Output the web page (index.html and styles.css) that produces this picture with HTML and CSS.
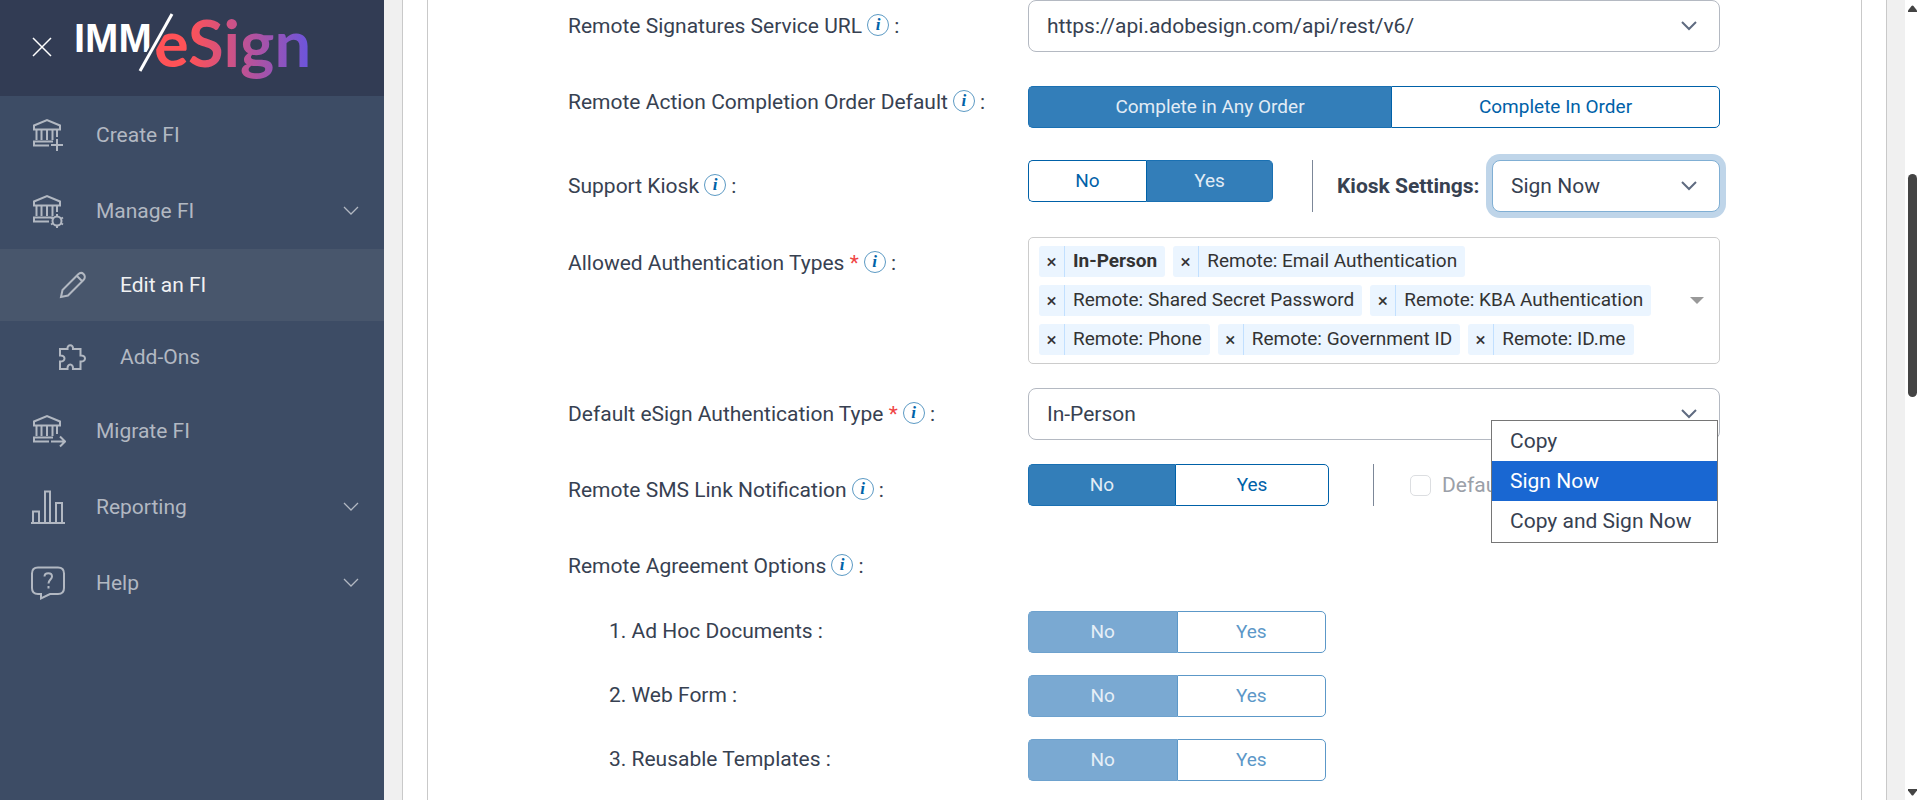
FILE: index.html
```html
<!DOCTYPE html>
<html lang="en">
<head>
  <meta charset="UTF-8" />
  <meta name="viewport" content="width=device-width, initial-scale=1" />
  <title>IMM/eSign - Edit an FI</title>
  <link rel="stylesheet" href="styles.css">
</head>
<body>
  <!-- shared icons -->
  <svg class="sprite" aria-hidden="true">
    <symbol id="bank" viewBox="0 0 36 36">
      <path d="M4 8.500 17 3 30 8.500V12.500H4ZM6.500 13V23M11.500 13V23M17 13V23M22.500 13V23M4 24.500H23M4 23.500V28.500H19" />
    </symbol>
    <symbol id="chevron" viewBox="0 0 16 10">
      <path d="M1 1 8 8 15 1" />
    </symbol>
  </svg>

  <aside class="sidebar">
    <header class="sidebar-header">
      <button type="button" class="close-btn" aria-label="Close menu">
        <svg viewBox="0 0 20 20"><path d="M1 1 19 19M19 1 1 19" /></svg>
      </button>
      <svg class="logo" viewBox="0 0 240 96">
        <defs>
          <linearGradient id="brand" gradientUnits="userSpaceOnUse" x1="82" y1="0" x2="232" y2="0">
            <stop offset="0.200" stop-color="#ff5257" />
            <stop offset="0.600" stop-color="#b8529a" />
            <stop offset="1" stop-color="#6b55dc" />
          </linearGradient>
        </defs>
        <text class="logo-imm" x="-3" y="52">IMM</text>
        <text class="logo-esign" x="77" y="67" fill="url(#brand)">eSign</text>
        <path class="logo-gap" d="M95 14 63 71" />
        <path class="logo-slash" d="M95 14 63 71" />
      </svg>
    </header>

    <nav class="menu">
      <a href="#" class="menu-item">
        <svg class="menu-icon" viewBox="0 0 36 36"><use href="#bank" /><path d="M27 13V20M27 22V34M21 28H33" /></svg>
        <span>Create FI</span>
      </a>
      <a href="#" class="menu-item">
        <svg class="menu-icon" viewBox="0 0 36 36">
          <use href="#bank" />
          <path d="M27 13V19" />
          <circle cx="27" cy="28" r="4.500" />
          <path d="M27 21V24M27 32V35M21 24.500 23.500 26M33 24.500 30.500 26M21 31.500 23.500 30M33 31.500 30.500 30" />
        </svg>
        <span>Manage FI</span>
        <svg class="menu-chevron"><use href="#chevron" /></svg>
      </a>
      <a href="#" class="menu-item sub active">
        <svg class="menu-icon" viewBox="0 0 28 28"><path d="M2 26 3.500 19 19 3.500C21 1.500 23 1.500 24.500 3S26.500 7 24.500 9L9 24.500ZM18 5 23 10" /></svg>
        <span>Edit an FI</span>
      </a>
      <a href="#" class="menu-item sub">
        <svg class="menu-icon" viewBox="0 0 28 28"><path d="M1 6H8.500C8 1 14.500 1 14 6H21.500V12.500C27.500 12 27.500 19 21.500 18.500V26H14C14.500 20 8 20 8.500 26H1V18.500C7 19 7 12 1 12.500Z" /></svg>
        <span>Add-Ons</span>
      </a>
      <a href="#" class="menu-item">
        <svg class="menu-icon" viewBox="0 0 36 36"><use href="#bank" /><path d="M27 13V21M21 28.500H35M30 23.500 35 28.500 30 33.500" /></svg>
        <span>Migrate FI</span>
      </a>
      <a href="#" class="menu-item">
        <svg class="menu-icon" viewBox="0 0 36 36"><path d="M1 34H35M3 34V22.500H9V34M15 34V2.500H20V34M26 34V14H32V34" /></svg>
        <span>Reporting</span>
        <svg class="menu-chevron"><use href="#chevron" /></svg>
      </a>
      <a href="#" class="menu-item">
        <svg class="menu-icon" viewBox="0 0 36 36">
          <path d="M8 2.500H28Q34 2.500 34 8.500V23Q34 29 28 29H20L11 33.500V29H8Q2 29 2 23V8.500Q2 2.500 8 2.500Z" />
          <path d="M14.500 11.500C14.500 7 22 7 22 11.500C22 14.500 18.500 14.500 18.500 18.500M18.500 21V23.500" />
        </svg>
        <span>Help</span>
        <svg class="menu-chevron"><use href="#chevron" /></svg>
      </a>
    </nav>
  </aside>

  <main class="page">
    <div class="card">
      <form class="settings">
        <div class="row">
          <div class="label"><label for="serviceUrl">Remote Signatures Service URL</label><span class="info">i</span> :</div>
          <div class="field">
            <div class="select-box">
              <select id="serviceUrl"><option>https://api.adobesign.com/api/rest/v6/</option></select>
              <svg><use href="#chevron" /></svg>
            </div>
          </div>
        </div>

        <div class="row row-order">
          <div class="label">Remote Action Completion Order Default<span class="info">i</span> :</div>
          <div class="field">
            <div class="toggle toggle-order">
              <button type="button" class="on">Complete in Any Order</button>
              <button type="button">Complete In Order</button>
            </div>
          </div>
        </div>

        <div class="row row-kiosk">
          <div class="label">Support Kiosk<span class="info">i</span> :</div>
          <div class="field split">
            <div class="toggle toggle-kiosk">
              <button type="button">No</button>
              <button type="button" class="on">Yes</button>
            </div>
            <div class="kiosk">
              <label for="kioskSettings">Kiosk Settings:</label>
              <div class="select-box focused">
                <select id="kioskSettings">
                  <option>Copy</option>
                  <option selected>Sign Now</option>
                  <option>Copy and Sign Now</option>
                </select>
                <svg><use href="#chevron" /></svg>
                <ul class="dropdown">
                  <li>Copy</li>
                  <li class="selected">Sign Now</li>
                  <li>Copy and Sign Now</li>
                </ul>
              </div>
            </div>
          </div>
        </div>

        <div class="row">
          <div class="label">Allowed Authentication Types <b class="req">*</b><span class="info">i</span> :</div>
          <div class="field">
            <div class="multi">
              <div class="chips">
                <span class="chip bold"><button type="button">×</button><span>In-Person</span></span>
                <span class="chip"><button type="button">×</button><span>Remote: Email Authentication</span></span>
                <span class="chip"><button type="button">×</button><span>Remote: Shared Secret Password</span></span>
                <span class="chip"><button type="button">×</button><span>Remote: KBA Authentication</span></span>
                <span class="chip"><button type="button">×</button><span>Remote: Phone</span></span>
                <span class="chip"><button type="button">×</button><span>Remote: Government ID</span></span>
                <span class="chip"><button type="button">×</button><span>Remote: ID.me</span></span>
              </div>
              <span class="caret"></span>
            </div>
          </div>
        </div>

        <div class="row">
          <div class="label"><label for="authType">Default eSign Authentication Type <b class="req">*</b></label><span class="info">i</span> :</div>
          <div class="field">
            <div class="select-box">
              <select id="authType"><option>In-Person</option></select>
              <svg><use href="#chevron" /></svg>
            </div>
          </div>
        </div>

        <div class="row">
          <div class="label">Remote SMS Link Notification<span class="info">i</span> :</div>
          <div class="field split">
            <div class="toggle toggle-sms">
              <button type="button" class="on">No</button>
              <button type="button">Yes</button>
            </div>
            <div class="default-check">
              <input type="checkbox" id="smsDefault" disabled />
              <label for="smsDefault">Default</label>
            </div>
          </div>
        </div>

        <div class="row row-heading">
          <div class="label">Remote Agreement Options<span class="info">i</span> :</div>
        </div>

        <div class="row row-sub">
          <div class="label">1. Ad Hoc Documents :</div>
          <div class="toggle toggle-sub">
            <button type="button" class="on" disabled>No</button>
            <button type="button" disabled>Yes</button>
          </div>
        </div>
        <div class="row row-sub">
          <div class="label">2. Web Form :</div>
          <div class="toggle toggle-sub">
            <button type="button" class="on" disabled>No</button>
            <button type="button" disabled>Yes</button>
          </div>
        </div>
        <div class="row row-sub">
          <div class="label">3. Reusable Templates :</div>
          <div class="toggle toggle-sub">
            <button type="button" class="on" disabled>No</button>
            <button type="button" disabled>Yes</button>
          </div>
        </div>
      </form>
    </div>
  </main>

  <div class="scrollbar" aria-hidden="true">
    <svg viewBox="0 0 9 7"><path d="M3.500 1Q4.500 0 5.500 1L9 5.500V7H0V5.500Z" /></svg>
    <div class="track"><div class="thumb"></div></div>
    <svg viewBox="0 0 9 7"><path d="M3.500 6Q4.500 7 5.500 6L9 1.500V0H0V1.500Z" /></svg>
  </div>
</body>
</html>
```
FILE: styles.css
```css
* {
  box-sizing: border-box;
}
body {
  margin: 0;
  height: 100vh;
  display: flex;
  overflow: hidden;
  background-color: #f0f0f0;
  color: #374151;
  font-family: Roboto, "Liberation Sans", sans-serif;
  font-size: 21px;
  line-height: 30px;
}
button, select, input {
  font: inherit;
  color: inherit;
}
.sprite {
  position: absolute;
  width: 0;
  height: 0;
}

/* sidebar */
.sidebar {
  width: 384px;
  flex-shrink: 0;
  background-color: #3d4c65;
}
.sidebar-header {
  height: 96px;
  padding-left: 32px;
  display: flex;
  gap: 25px;
  background-color: #323c54;
}
.close-btn {
  width: 20px;
  padding: 0;
  border: none;
  background: none;
  cursor: pointer;
}
.close-btn svg {
  display: block;
  width: 20px;
  height: 20px;
  margin-top: -3px;
  fill: none;
  stroke: #fff;
  stroke-width: 1.5;
}
.logo {
  width: 240px;
  height: 96px;
  overflow: visible;
}
.logo-imm {
  font: bold 40px "Liberation Sans", sans-serif;
  fill: #fff;
}
.logo-esign {
  font: bold 65px Lato, sans-serif;
}
.logo-gap {
  stroke: #323c54;
  stroke-width: 7;
}
.logo-slash {
  stroke: #fff;
  stroke-width: 3;
}
.menu {
  padding-top: 1px;
}
.menu-item {
  height: 76px;
  padding: 0 25px 0 30px;
  display: flex;
  align-items: center;
  color: #b2b8c2;
  text-decoration: none;
}
.menu-icon {
  width: 36px;
  height: 36px;
  margin-right: 30px;
  fill: none;
  stroke: #b2b8c2;
  stroke-width: 2;
}
.menu-chevron {
  width: 16px;
  height: 10px;
  margin-left: auto;
  fill: none;
  stroke: #b2b8c2;
  stroke-width: 1.3;
}
.menu-item.sub {
  height: 72px;
  padding-left: 59px;
}
.sub .menu-icon {
  width: 28px;
  height: 28px;
  margin-right: 33px;
}
.menu-item.active {
  background-color: #48566c;
  color: #f0f1f3;
}

/* form */
.page {
  flex: 1;
  padding: 0 18px;
}
.card {
  height: 100vh;
  padding: 0 24px;
  overflow: hidden;
  background-color: #fff;
  border: solid #c9c9c9;
  border-width: 0 1px;
}
.settings {
  min-height: 100%;
  padding: 0 141px 0 140px;
  border: solid #c9c9c9;
  border-width: 0 1px;
}
.row {
  display: grid;
  grid-template-columns: 460px 1fr;
  min-height: 52px;
  margin-bottom: 24px;
}
.row-order {
  min-height: 60px;
}
.row-order .toggle {
  margin-top: 10px;
}
.row-kiosk {
  min-height: 53px;
}
.label {
  padding-top: 11px;
}
.row-heading {
  margin-bottom: 19px;
}
.row-sub {
  min-height: 42px;
  margin-bottom: 22px;
}
.row-sub .label {
  padding: 5px 0 0 41px;
}
.req {
  color: #ef4444;
  font-weight: normal;
}
.info {
  display: inline-block;
  width: 22px;
  height: 22px;
  margin-left: 5px;
  border: 1px solid #5c9ac4;
  border-radius: 50%;
  color: #0063a8;
  font: italic bold 17px/20px "Liberation Serif", serif;
  text-align: center;
  vertical-align: 3px;
}
.select-box {
  position: relative;
}
.select-box select {
  display: block;
  width: 100%;
  height: 52px;
  padding: 0 18px;
  appearance: none;
  background-color: #fff;
  border: 1px solid #b4b9c2;
  border-radius: 8px;
}
.select-box > svg {
  position: absolute;
  top: 21px;
  right: 23px;
  width: 16px;
  height: 10px;
  fill: none;
  stroke: #5f6b80;
  stroke-width: 2;
  pointer-events: none;
}
.select-box.focused select {
  border-color: #80afd4;
  box-shadow: 0 0 0 6px #bfd5e9;
}
.split {
  display: flex;
  align-items: flex-start;
}

.toggle {
  display: flex;
  height: 42px;
}
.toggle button {
  flex: 1;
  padding: 0;
  font-size: 19px;
  color: #0061a8;
  background-color: #fff;
  border: 1px solid #0061a8;
  cursor: pointer;
}
.toggle button:first-child {
  border-right-width: 0;
  border-radius: 5px 0 0 5px;
}
.toggle button:last-child {
  border-radius: 0 5px 5px 0;
}
.toggle .on {
  color: #e2ecf5;
  background-color: #337eb9;
  border-color: #1a70b2;
}
.toggle .on:last-child {
  border-left-color: #0061a8;
}
.toggle-order button:first-child {
  flex: 0 0 363px;
}
.toggle-kiosk {
  width: 245px;
}
.toggle-kiosk button:first-child {
  flex: 0 0 118px;
}
.toggle-sms {
  width: 301px;
}
.toggle-sms button:first-child {
  flex: 0 0 147px;
}
.toggle-sub {
  width: 298px;
}
.toggle-sub button {
  color: #5c98c8;
  border-color: #5c98c8;
}
.toggle-sub .on {
  color: #e6eff7;
  background-color: #7aa9d2;
  border-color: #6ea2ce;
}

.kiosk {
  flex: 1;
  display: flex;
  align-items: center;
  justify-content: space-between;
  margin-left: 39px;
  padding-left: 24px;
  border-left: 1px solid #7c8798;
  font-weight: bold;
}
.kiosk .select-box {
  width: 228px;
  font-weight: normal;
}
.dropdown {
  position: absolute;
  top: 260px;
  left: -1px;
  z-index: 5;
  width: 227px;
  margin: 0;
  padding: 0 0 1px;
  list-style: none;
  background-color: #fff;
  border: 1px solid #767676;
}
.dropdown li {
  height: 40px;
  padding: 0 18px;
  line-height: 40px;
}
.dropdown .selected {
  background-color: #1967d2;
  color: #fff;
}

.multi {
  display: flex;
  align-items: center;
  padding: 8px 15px 8px 10px;
  border: 1px solid #ccc;
  border-radius: 5px;
}
.chips {
  flex: 1;
  display: flex;
  flex-wrap: wrap;
  gap: 8px;
}
.chip {
  display: flex;
  height: 31px;
  color: #333;
  background-color: #ebf5ff;
  border-radius: 3px;
  font-size: 19px;
  line-height: 30px;
}
.chip button {
  width: 26px;
  padding: 0;
  line-height: 29px;
  font-weight: normal;
  background: none;
  border: none;
  border-right: 1px solid #c2e0ff;
  cursor: pointer;
}
.chip > span {
  padding: 0 8px;
}
.chip.bold {
  font-weight: bold;
}
.caret {
  border: 7px solid transparent;
  border-top-color: #999;
  border-bottom: none;
}

.default-check {
  display: flex;
  align-items: center;
  gap: 11px;
  height: 42px;
  margin-left: 44px;
  padding-left: 36px;
  border-left: 1px solid #7c8798;
  color: #9ba0a8;
}
.default-check input {
  width: 21px;
  height: 21px;
  margin: 0;
  appearance: none;
  border: 1px solid #dcdee1;
  border-radius: 5px;
}

/* scrollbar */
.scrollbar {
  width: 15px;
  height: 100vh;
  padding: 5px 3px 4px;
  display: flex;
  flex-direction: column;
  background-color: #fff;
}
.scrollbar svg {
  width: 9px;
  height: 7px;
  fill: #444;
}
.track {
  flex: 1;
  padding-top: 162px;
}
.thumb {
  height: 223px;
  background-color: #444;
  border-radius: 5px;
}
```
